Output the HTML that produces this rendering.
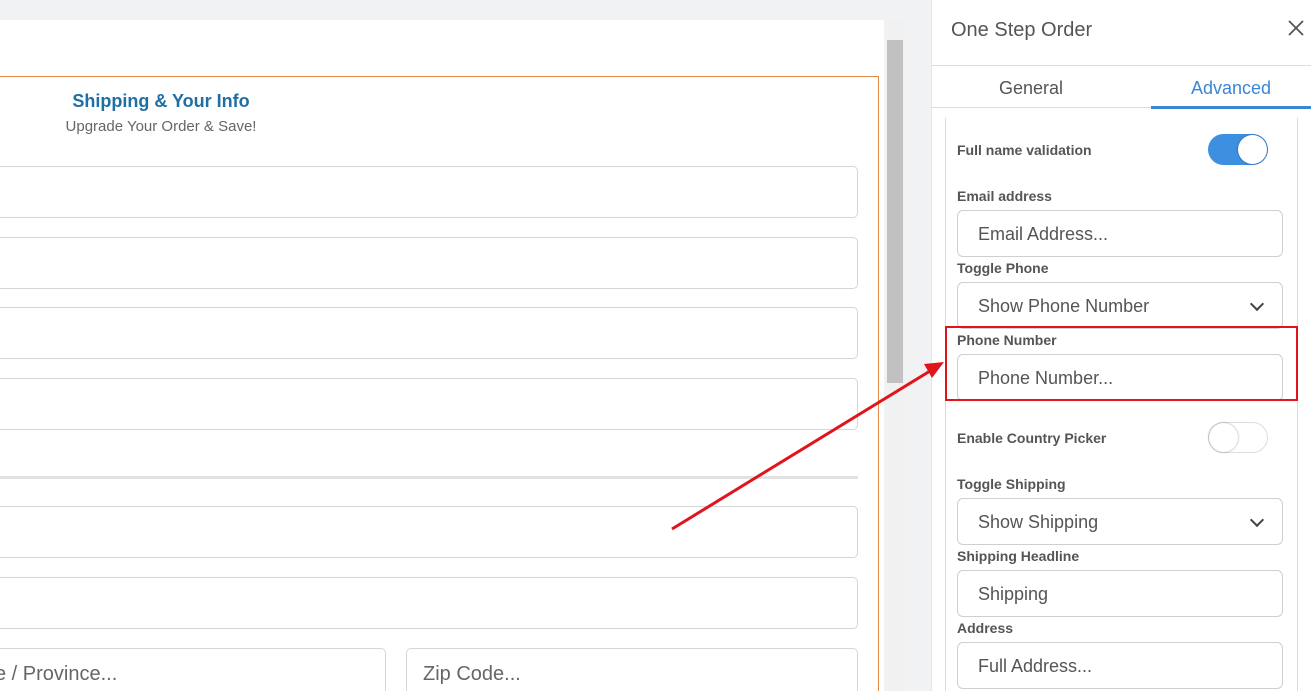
<!DOCTYPE html>
<html><head><style>
html,body{margin:0;width:1311px;height:691px;overflow:hidden}
body{background:#f1f2f3;font-family:"Liberation Sans",sans-serif;position:relative}
.a{position:absolute;box-sizing:border-box}
.in{position:absolute;box-sizing:border-box;border:1px solid #d6d6d6;border-radius:5px;background:#fff}
.lbl{position:absolute;left:957px;color:#555;font-weight:bold;font-size:14px}
.pin{position:absolute;left:957px;width:326px;height:47px;box-sizing:border-box;border:1px solid #ccd0d4;border-radius:6px;background:#fff;font-size:18px;color:#555;padding:13px 20px}
.tg{position:absolute;left:1208px;width:60px;height:31px;border-radius:16px;box-sizing:border-box}
.knob{position:absolute;top:1px;width:29px;height:29px;border-radius:50%;background:#fff;box-shadow:0 0 2px rgba(0,0,0,.4)}
.chev{position:absolute;right:20px;top:16px;width:8px;height:8px;border-right:2px solid #444;border-bottom:2px solid #444;transform:rotate(45deg)}
</style></head><body>
<div class="a" style="left:0;top:20px;width:884px;height:671px;background:#fff"></div>
<div class="a" style="left:-2px;top:76px;width:881px;height:620px;border:1px solid #e08a4a"></div>
<div class="a" style="left:0;top:91px;width:322px;text-align:center;color:#1d6fa5;font-weight:bold;font-size:18px">Shipping &amp; Your Info</div>
<div class="a" style="left:0;top:118px;width:322px;text-align:center;color:#666;font-size:15px">Upgrade Your Order &amp; Save!</div>
<div class="in" style="left:-6px;top:166px;width:864px;height:52px"></div>
<div class="in" style="left:-6px;top:237px;width:864px;height:52px"></div>
<div class="in" style="left:-6px;top:307px;width:864px;height:52px"></div>
<div class="in" style="left:-6px;top:378px;width:864px;height:52px"></div>
<div class="a" style="left:0;top:476px;width:858px;height:3px;background:#e2e2e2"></div>
<div class="in" style="left:-6px;top:506px;width:864px;height:52px"></div>
<div class="in" style="left:-6px;top:577px;width:864px;height:52px"></div>
<div class="in" style="left:-6px;top:648px;width:392px;height:52px;font-size:20px;color:#666;padding:14px 0 0 0">e / Province...</div>
<div class="in" style="left:406px;top:648px;width:452px;height:52px;font-size:20px;color:#666;padding:14px 16px">Zip Code...</div>
<div class="a" style="left:886px;top:20px;width:18px;height:671px;background:#f1f1f1"></div>
<div class="a" style="left:887px;top:40px;width:16px;height:343px;background:#c1c1c1"></div>
<div class="a" style="left:931px;top:0;width:380px;height:691px;background:#fff;border-left:1px solid #e5e5e5"></div>
<div class="a" style="left:951px;top:19px;font-size:20px;color:#555">One Step Order</div>
<svg class="a" style="left:1288px;top:20px" width="16" height="16"><path d="M1 1L15 15M15 1L1 15" stroke="#555" stroke-width="1.8"/></svg>
<div class="a" style="left:931px;top:65px;width:380px;height:1px;background:#ddd"></div>
<div class="a" style="left:931px;top:78px;width:200px;text-align:center;font-size:18px;color:#555">General</div>
<div class="a" style="left:1151px;top:78px;width:160px;text-align:center;font-size:18px;color:#3a86d4">Advanced</div>
<div class="a" style="left:931px;top:107px;width:380px;height:1px;background:#ddd"></div>
<div class="a" style="left:1151px;top:106px;width:160px;height:3px;background:#3a86d4"></div>
<div class="a" style="left:945px;top:118px;width:353px;height:580px;border-left:1px solid #ddd;border-right:1px solid #ddd"></div>
<div class="lbl" style="top:142px">Full name validation</div>
<div class="tg" style="top:134px;background:#3d8fe0"><div class="knob" style="left:30px"></div></div>
<div class="lbl" style="top:188px">Email address</div>
<div class="pin" style="top:210px">Email Address...</div>
<div class="lbl" style="top:260px">Toggle Phone</div>
<div class="pin" style="top:282px">Show Phone Number<div class="chev"></div></div>
<div class="lbl" style="top:332px">Phone Number</div>
<div class="pin" style="top:354px">Phone Number...</div>
<div class="a" style="left:945px;top:326px;width:353px;height:75px;border:2px solid #e0141b"></div>
<div class="lbl" style="top:430px">Enable Country Picker</div>
<div class="tg" style="top:422px;background:#fff;border:1px solid #ddd"><div class="knob" style="left:0;top:0"></div></div>
<div class="lbl" style="top:476px">Toggle Shipping</div>
<div class="pin" style="top:498px">Show Shipping<div class="chev"></div></div>
<div class="lbl" style="top:548px">Shipping Headline</div>
<div class="pin" style="top:570px">Shipping</div>
<div class="lbl" style="top:620px">Address</div>
<div class="pin" style="top:642px">Full Address...</div>
<svg class="a" style="left:0;top:0" width="1311" height="691"><line x1="672" y1="529" x2="930" y2="371" stroke="#e0141b" stroke-width="3"/><polygon points="944,362 924,364 932,378" fill="#e0141b"/></svg>
</body></html>
